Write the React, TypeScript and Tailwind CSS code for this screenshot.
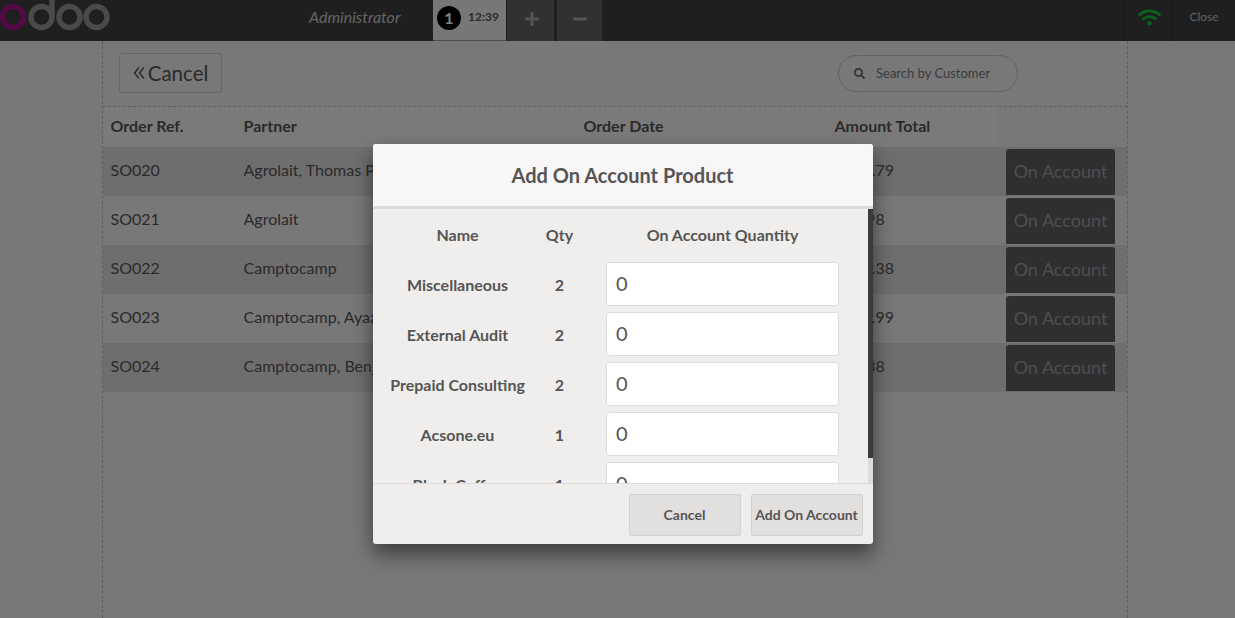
import { FaMinus, FaPlus, FaSearch, FaWifi } from 'react-icons/fa';

const orders = [
  { ref: 'SO020', partner: 'Agrolait, Thomas Passot', date: '08/24/2017 10:12:40', amount: '1279.79' },
  { ref: 'SO021', partner: 'Agrolait', date: '08/24/2017 10:13:02', amount: '112.98' },
  { ref: 'SO022', partner: 'Camptocamp', date: '08/24/2017 10:13:27', amount: '1112.38' },
  { ref: 'SO023', partner: 'Camptocamp, Ayaan Agarwal', date: '08/24/2017 10:13:51', amount: '1112.99' },
  { ref: 'SO024', partner: 'Camptocamp, Benjamin Flores', date: '08/24/2017 10:14:16', amount: '112.38' },
];

const lines = [
  { name: 'Miscellaneous', qty: 2 },
  { name: 'External Audit', qty: 2 },
  { name: 'Prepaid Consulting', qty: 2 },
  { name: 'Acsone.eu', qty: 1 },
  { name: 'Black Coffee', qty: 1 },
];

function Logo() {
  return (
    <svg width="112" height="41" viewBox="0 0 112 41" className="shrink-0">
      <circle cx="13" cy="17" r="10.5" fill="none" stroke="#a8148c" strokeWidth="5.5" />
      <circle cx="41.5" cy="17" r="10.5" fill="none" stroke="#949494" strokeWidth="5.5" />
      <path d="M52 -4V17" fill="none" stroke="#949494" strokeWidth="5.5" />
      <circle cx="69.5" cy="17" r="10.5" fill="none" stroke="#949494" strokeWidth="5.5" />
      <circle cx="96.5" cy="17" r="10.5" fill="none" stroke="#949494" strokeWidth="5.5" />
    </svg>
  );
}

function TopBar() {
  return (
    <div className="flex h-[41px] items-stretch bg-[#3e3e3e]">
      <Logo />
      <div className="ml-[197px] flex w-[124px] items-center pb-[7px] text-[16px] italic text-[#c8c8c8]">Administrator</div>
      <div className="flex w-[73px] items-center border-b border-[#9a9a9a] bg-[#f0eeee] pl-[4px] text-[#555555]">
        <span className="mb-[4px] flex h-[24px] w-[24px] items-center justify-center rounded-full bg-black text-[16px] font-bold text-white">1</span>
        <span className="ml-[7px] mb-[6px] text-[12px] font-bold">12:39</span>
      </div>
      <div className="ml-[1px] flex w-[47px] items-center justify-center bg-[#626262] pb-[4px] pl-[2px] text-[16px] text-[#a8a8a8]"><FaPlus /></div>
      <div className="ml-[3px] flex w-[45px] items-center justify-center bg-[#626262] pb-[4px] pl-[1px] text-[16px] text-[#a8a8a8]"><FaMinus /></div>
      <div className="ml-auto flex w-[49px] items-center justify-center border-l border-[#2e2e2e] pb-[7px] pl-[3px] text-[23px] text-[#16c436]"><FaWifi /></div>
      <div className="flex w-[63px] items-center justify-center border-l border-[#2e2e2e] pb-[7px] text-[12px] text-[#c4c4c4]">Close</div>
    </div>
  );
}

function OrderList() {
  return (
    <div className="ml-[102px] h-[577px] w-[1026px] border-x border-dashed border-[#c0c0c0] text-[#555555]">
      <div className="flex h-[66px] items-center justify-between border-b border-dashed border-[#c0c0c0] pb-[1px] pl-[16px] pr-[109px]">
        <button className="flex h-[40px] w-[103px] items-center justify-center gap-[3px] rounded-[3px] border border-[#cacaca] text-[20.5px]">
          <svg width="12" height="14" viewBox="0 0 12 14" fill="none" stroke="currentColor" strokeWidth="1.5">
            <path d="M6 1.5L1.5 7L6 12.5M11 1.5L6.5 7L11 12.5" />
          </svg>
          <span>Cancel</span>
        </button>
        <div className="flex h-[37px] w-[180px] items-center rounded-full border border-[#c4c4c4] pl-[15px] text-[13px] text-[#777777]">
          <FaSearch className="mr-[11px] text-[11px] text-[#666666]" />
          <span className="pt-[1px]">Search by Customer</span>
        </div>
      </div>
      <div className="flex h-[40px] w-[894px] items-center bg-[#f7f5f5] pb-[2px] text-[16px] font-bold">
        <div className="w-[140.5px] pl-[7.5px]">Order Ref.</div>
        <div className="w-[340px]">Partner</div>
        <div className="w-[251px]">Order Date</div>
        <div>Amount Total</div>
      </div>
      {orders.map((o, i) => (
        <div key={o.ref} className={`flex h-[49px] items-start text-[16px] ${i % 2 === 0 ? 'bg-[#dfdddd]' : 'bg-[#f3f1f1]'}`}>
          <div className="mt-[11px] w-[140.5px] pl-[7.5px]">{o.ref}</div>
          <div className="mt-[11px] w-[340px] truncate">{o.partner}</div>
          <div className="mt-[11px] w-[251px]">{o.date}</div>
          <div className="mt-[11px] w-[171.5px]">{o.amount}</div>
          <button className="mt-[2px] flex h-[46px] w-[109px] items-center justify-center rounded-t-[3px] bg-[#5f5f5f] pb-[2px] text-[18px] text-[#9c9c9c]">On Account</button>
        </div>
      ))}
    </div>
  );
}

function Modal() {
  return (
    <div className="absolute left-[373px] top-[144px] flex h-[400px] w-[500px] flex-col overflow-hidden rounded-[3px] bg-[#f0eeec] text-[#555555] shadow-[0_10px_20px_rgba(0,0,0,0.5)]">
      <div className="flex h-[65px] shrink-0 items-center justify-center border-b-[3px] border-[#dcdcdc] bg-[#f8f6f6] pr-[1px] text-[20px] font-bold">
        Add On Account Product
      </div>
      <div className="relative h-[274px] shrink-0 overflow-hidden">
        <div className="absolute right-0 top-0 h-[249px] w-[5px] bg-[#3a3a3a]" />
        <div className="absolute bottom-0 right-0 h-[25px] w-[5px] bg-[#dedcda]" />
        <div className="flex h-[53px] items-center pb-[2px] pl-[9.5px] text-[16px] font-bold">
          <div className="w-[150px] text-center">Name</div>
          <div className="w-[54px] text-center">Qty</div>
          <div className="ml-[19.5px] w-[233px] text-center">On Account Quantity</div>
        </div>
        {lines.map((l) => (
          <div key={l.name} className="flex h-[50px] items-start pl-[9.5px] text-[16px] font-bold">
            <div className="mt-[11px] w-[150px] text-center">{l.name}</div>
            <div className="mt-[11px] w-[54px] text-center">{l.qty}</div>
            <div className="ml-[19.5px] flex h-[44px] w-[233px] items-center rounded-[3px] border border-[#dcdcdc] bg-white pb-[3px] pl-[9px] text-[20px] font-normal">0</div>
          </div>
        ))}
      </div>
      <div className="flex flex-1 items-start justify-end gap-[10px] border-t border-[#dcdcdc] pr-[10px] pt-[10px] text-[14px] font-bold">
        <button className="h-[42px] w-[112px] rounded-[2px] border border-[#d4d2d0] bg-[#e1e0de] pb-[1px] pr-[1px]">Cancel</button>
        <button className="h-[42px] w-[112px] rounded-[2px] border border-[#d4d2d0] bg-[#e1e0de] pb-[1px] pr-[1px]">Add On Account</button>
      </div>
    </div>
  );
}

export default function App() {
  return (
    <div className="relative h-[618px] w-[1235px] overflow-hidden bg-[#f2f0f0] font-['Lato',sans-serif]">
      <TopBar />
      <OrderList />
      <div className="absolute inset-0 bg-black/50" />
      <Modal />
    </div>
  );
}
